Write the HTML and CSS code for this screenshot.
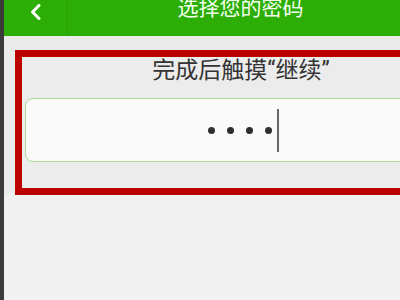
FILE: index.html
```html
<!DOCTYPE html>
<html lang="zh-CN">
<head>
<meta charset="utf-8">
<link rel="stylesheet" href="styles.css">
</head>
<body>
<div class="strip"></div>
<div class="screen">
  <header class="bar">
    <div class="back">
      <svg width="14" height="16" viewBox="0 0 14 16"><path d="M10 1.5 L3.5 8 L10 14.5" fill="none" stroke="#fff" stroke-width="3" stroke-linecap="round" stroke-linejoin="round"/></svg>
    </div>
    <div class="title">选择您的密码</div>
    <div class="side"></div>
  </header>
  <main class="content">
    <section class="frame">
      <p class="hint">完成后触摸“继续”</p>
      <div class="field">
        <span class="dot"></span><span class="dot"></span><span class="dot"></span><span class="dot"></span><span class="caret"></span>
      </div>
    </section>
  </main>
</div>
</body>
</html>
```
FILE: styles.css
```css
html, body {
  margin: 0;
  padding: 0;
}
body {
  width: 400px;
  height: 300px;
  overflow: hidden;
  display: flex;
  background: #f1f1f1;
  font-family: "Roboto", "Noto Sans CJK SC", sans-serif;
}
.strip {
  width: 4px;
  flex-shrink: 0;
  background: #3b3b3b;
}
.screen {
  width: 474px;
  flex-shrink: 0;
  display: flex;
  flex-direction: column;
}
.bar {
  height: 36px;
  background: #2cae06;
  display: grid;
  grid-template-columns: 64px 1fr 64px;
}
.back {
  border-right: 1px solid #27a003;
  display: flex;
  justify-content: center;
  padding-top: 4px;
  box-sizing: border-box;
  height: 36px;
}
.title {
  color: #f4fff0;
  font-size: 21px;
  line-height: 16px;
  text-align: center;
  margin-left: -1px;
}
.content {
  background: #ebebeb;
  padding-top: 14px;
}
.frame {
  margin: 0 11px;
  border: 7px solid #bb0000;
  border-top-width: 7px;
  background: #ececec;
  padding: 0 3px 26px;
  margin-bottom: -1px;
}
.hint {
  margin: 0;
  text-align: center;
  font-size: 23px;
  line-height: 27px;
  color: #333;
  height: 27px;
}
.field {
  margin-top: 14px;
  height: 62px;
  border: 1px solid #a8dc98;
  border-radius: 8px;
  background: #fafafa;
  display: flex;
  align-items: center;
  justify-content: center;
  gap: 12px;
  padding-left: 5px;
}
.dot {
  width: 7px;
  height: 7px;
  border-radius: 50%;
  background: #2e2e2e;
}
.caret {
  width: 2px;
  height: 43px;
  background: #666;
  margin-left: -7px;
}
```
